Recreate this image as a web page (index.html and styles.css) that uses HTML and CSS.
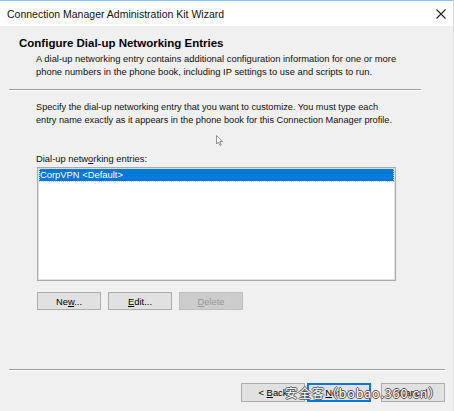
FILE: index.html
```html
<!DOCTYPE html>
<html lang="en">
<head>
<meta charset="utf-8">
<title>Connection Manager Administration Kit Wizard</title>
<link rel="stylesheet" href="styles.css">
</head>
<body>
<div class="window">
  <div class="titlebar">
    <span class="title">Connection Manager Administration Kit Wizard</span>
    <svg class="close" width="10" height="10" viewBox="0 0 10 10"><path d="M0.5 0.5 L9.5 9.5 M9.5 0.5 L0.5 9.5" stroke="#222" stroke-width="1.1" fill="none"/></svg>
  </div>

  <div class="header">
    <h1 class="heading">Configure Dial-up Networking Entries</h1>
    <p class="subtitle">A dial-up networking entry contains additional configuration information for one or more<br>phone numbers in the phone book, including IP settings to use and scripts to run.</p>
  </div>
  <div class="sep sep-top"></div>

  <div class="content">
    <p class="intro">Specify the dial-up networking entry that you want to customize. You must type each<br>entry name exactly as it appears in the phone book for this Connection Manager profile.</p>
    <div class="field-label">Dial-up netw<u>o</u>rking entries:</div>
    <div class="listbox">
      <div class="item selected"><span class="focus">CorpVPN &lt;Default&gt;</span></div>
    </div>
    <div class="actions">
      <button class="btn">Ne<u>w</u>...</button>
      <button class="btn"><u>E</u>dit...</button>
      <button class="btn" disabled><u>D</u>elete</button>
    </div>
  </div>

  <div class="sep sep-bottom"></div>
  <div class="footer">
    <button class="btn nav">&lt; <u>B</u>ack</button>
    <button class="btn nav default"><u>N</u>ext &gt;</button>
    <button class="btn nav cancel">Cancel</button>
  </div>

  <svg class="cursor" width="7" height="11" viewBox="0 0 7 11"><path d="M0.5 0.5 L0.5 9 L2.5 7 L4 10.5 L5.2 10 L3.8 6.6 L6.5 6.6 Z" fill="#fff" stroke="#777" stroke-width="0.8"/></svg>
  <div class="watermark">安全客（bobao.360.cn）</div>
</div>
</body>
</html>
```

FILE: styles.css
```css
html, body {
  margin: 0;
  padding: 0;
}

body {
  width: 454px;
  height: 411px;
  overflow: hidden;
  background: #f0f0f0;
  font-family: "Liberation Sans", Arial, sans-serif;
  font-size: 10px;
  color: #000;
}

.window {
  position: relative;
  width: 454px;
  height: 411px;
  display: flex;
  flex-direction: column;
  background: #f0f0f0;
  box-sizing: border-box;
  border-right: 1px solid #dcdcdc;
}

/* window caption */
.titlebar {
  height: 25px;
  border-top: 1px solid #8cc3ef;
  background: #fff;
  display: flex;
  align-items: center;
  justify-content: space-between;
  padding: 0 7px 0 7px;
}

.title {
  font-size: 10.5px;
  color: #111;
}

/* wizard page header */
.header {
  padding: 11px 0 0 19px;
}

.heading {
  margin: 0;
  font-size: 11.5px;
  line-height: 13px;
  font-weight: bold;
}

.subtitle {
  margin: 2px 0 0 17px;
  font-size: 9.4px;
  line-height: 13px;
  color: #111;
}

.sep {
  height: 1px;
  background: #a0a0a0;
  border-bottom: 1px solid #fff;
  margin-left: 9px;
}

.sep-top {
  margin-top: 11px;
  width: 412px;
}

.sep-bottom {
  width: 436px;
  margin-top: auto;
}

/* page body */
.content {
  padding: 0 0 0 36px;
}

.intro {
  margin: 10px 0 0 0;
  font-size: 9.2px;
  line-height: 13px;
  color: #111;
}

.field-label {
  margin-top: 25px;
  font-size: 9.4px;
  line-height: 13px;
  color: #111;
}

.listbox {
  margin-top: 2px;
  margin-left: 1px;
  width: 359px;
  height: 114px;
  box-sizing: border-box;
  background: #fff;
  border: 1px solid #a9a9a9;
  box-shadow: inset 0 0 0 1px #e3e3e3;
  padding: 1px;
}

.item {
  height: 12px;
  line-height: 12px;
  font-size: 9.4px;
  padding: 0 1px;
}

.item.selected {
  background: #0078d7;
  color: #fff;
}

.item .focus {
  display: block;
  outline: 1px dotted #b8d6f2;
  outline-offset: 0;
}

.actions {
  display: flex;
  gap: 7px;
  margin-top: 11px;
  margin-left: 1px;
}

.btn {
  width: 64px;
  height: 18px;
  box-sizing: border-box;
  padding: 0;
  font-family: inherit;
  font-size: 9.4px;
  color: #000;
  background: #e1e1e1;
  border: 1px solid #adadad;
}

.btn:disabled {
  background: #cccccc;
  border-color: #bfbfbf;
  color: #9a9a9a;
}

/* navigation buttons */
.footer {
  display: flex;
  justify-content: flex-end;
  gap: 2px;
  padding: 12px 8px 9px 0;
}

.btn.nav {
  height: 19px;
}

.btn.default {
  border: 2px solid #0078d7;
}

.btn.cancel {
  margin-left: 8px;
}

.cursor {
  position: absolute;
  left: 216px;
  top: 135px;
}

.watermark {
  position: absolute;
  left: 285px;
  top: 385px;
  font-family: "Noto Sans CJK SC", "Liberation Sans", sans-serif;
  font-size: 12.5px;
  line-height: 15px;
  color: #fff;
  letter-spacing: 0.9px;
  text-shadow: 1px 0 0 #555, -1px 0 0 #555, 0 1px 0 #555, 0 -1px 0 #555;
}
```
